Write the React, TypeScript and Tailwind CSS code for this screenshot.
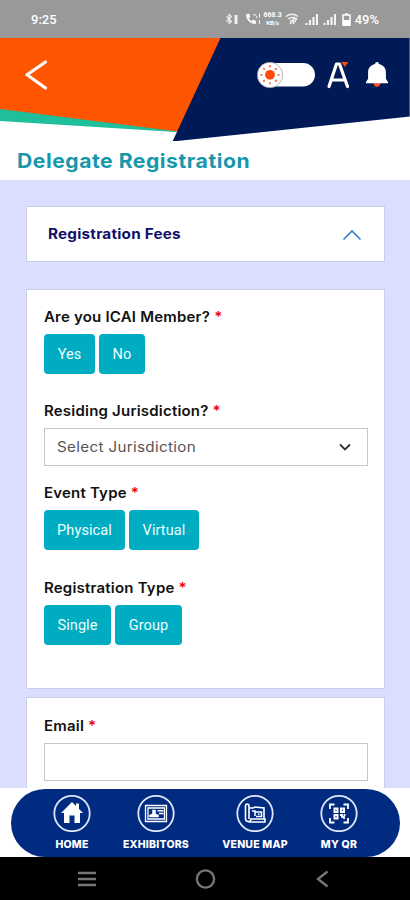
import type { ReactNode } from 'react';

const StatusBar = () => (
  <div className="h-[38px] shrink-0 bg-[#999999] flex items-center justify-between pl-[31px] pr-[31px] text-white font-['Roboto',sans-serif]">
    <span className="text-[13px] font-medium leading-none mt-px">9:25</span>
    <div className="flex items-center">
      <svg className="w-[14px] h-[14px]" viewBox="0 0 14 14" fill="none" stroke="#f0f0f0" strokeWidth="1.1">
        <path d="M1.500 4.500l5 5-2.500 2V2.500l2.500 2-5 5" />
        <path d="M11 3v9" strokeWidth="3" />
      </svg>
      <svg className="w-[16px] h-[14px] ml-[6px]" viewBox="0 0 16 14" fill="none" stroke="#f6f6f6">
        <path d="M1.500 2.500c0 5.500 3.500 9 9 9v-2.500l-2.500-1-1.500 1.500c-1.500-.8-2.500-2-3-3.500l1.500-1.200-1-2.800z" fill="#f6f6f6" />
        <path d="M8 2.500c3 0 4 1.500 4 4M14.500 1.500v4M14.500 8v4" />
      </svg>
      <div className="flex flex-col items-center ml-[2px] w-[20px] text-[7px] leading-[7px] font-bold">
        <span className="h-[7px]">668.3</span>
        <span className="h-[7px] text-[6px]">KB/s</span>
      </div>
      <svg className="w-[14px] h-[12px] ml-[2px]" viewBox="0 0 14 12" fill="none" stroke="#f0f0f0" strokeWidth="1.500">
        <path d="M1 3.500c4-3 8-3 12 0M3 6c3-2 6-2 8 0M5 8.500c1-1 3-1 4 0" />
        <path d="M5 11l5-7M8 11l4-6" />
      </svg>
      <svg className="w-[13px] h-[12px] ml-[6px]" viewBox="0 0 13 12" stroke="#f4f4f4" strokeWidth="2.200">
        <path d="M1.500 12V10M5 12V7M8.500 12V4M12 12V1" />
      </svg>
      <svg className="w-[13px] h-[12px] ml-[5px]" viewBox="0 0 13 12" stroke="#f4f4f4" strokeWidth="2.200">
        <path d="M1.500 12V10M5 12V7M8.500 12V4M12 12V1" />
      </svg>
      <svg className="w-[9px] h-[13px] ml-[6px]" viewBox="0 0 9 13" fill="none" stroke="#fff" strokeWidth="1.500">
        <path d="M1 2h7v10.200H1zM3 1h3" />
        <path d="M1 9.500h7" strokeWidth="5" />
      </svg>
      <span className="ml-[4px] text-[13px] leading-none font-medium">49%</span>
    </div>
  </div>
);

const Header = () => (
  <header className="relative h-[103px] shrink-0">
    <svg className="absolute inset-0 w-full h-full" viewBox="0 0 410 103">
      <path d="M0 68L178 92.500 176 94 0 83z" fill="#1fbf9c" />
      <path d="M0 0H223L178 93.500 0 71z" fill="#ff5500" />
      <path d="M220.500 0H410V78.500L172.500 103.500z" fill="#001a57" />
      <path d="M409.500 0V78" stroke="#4d5f8c" />
    </svg>
    <div className="relative flex items-start">
      <button className="ml-[24px] mt-[21px]" aria-label="Back">
        <svg className="w-[24px] h-[32px]" viewBox="0 0 24 32" fill="none" stroke="#fff" strokeWidth="3.200" strokeLinecap="round" strokeLinejoin="round">
          <path d="M21.500 3L3 15.800 21.500 29" />
        </svg>
      </button>
      <div className="flex-1" />
      <svg className="w-[58px] h-[28px] mt-[23px]" viewBox="0 0 58 28">
        <rect x="1" y="2" width="57" height="23.500" rx="11.750" fill="#fff" />
        <circle cx="13" cy="14" r="12.700" fill="#fff" stroke="#9a9a9a" strokeWidth=".7" />
        <circle cx="13" cy="13.800" r="4.900" fill="#ff4a0c" />
        <g stroke="#ff6a35" strokeWidth="1.800" strokeLinecap="round">
          <path d="M13 5v.6M13 22v.6M4.200 13.800h.6M21.200 13.800h.6M6.800 7.600l.5.500M18.700 19.500l.5.500M6.800 20l.5-.5M18.700 8.100l.5-.5" />
        </g>
      </svg>
      <svg className="w-[24px] h-[44px] ml-[11px] mt-[15px]" viewBox="0 0 24 44" fill="none" stroke="#fff" strokeWidth="3.200" strokeLinecap="round" strokeLinejoin="round">
        <path d="M3 33.500L10.500 11h3L21.500 33.500M6 27h13" />
        <path d="M15 9h7.500l-3.500 5z" fill="#f24a13" stroke="none" />
      </svg>
      <svg className="w-[24px] h-[30px] ml-[15px] mr-[21px] mt-[22px]" viewBox="0 0 24 30">
        <path d="M8.300 22a3.700 5 0 0 0 7.400 0z" fill="#f4511e" />
        <path d="M12 2c1.200 0 1.800.8 1.900 1.900 4.500 1 7 4.100 7 8.300v6.500l2.100 3.200v1.300H1v-1.300l2.100-3.200v-6.500c0-4.200 2.500-7.300 7-8.300C10.200 2.800 10.800 2 12 2z" fill="#fff" />
      </svg>
    </div>
  </header>
);

const Label = ({ children }: { children: ReactNode }) => (
  <p className="w-max h-[22px] mb-[6px] leading-[22px] text-[14px] font-semibold tracking-[0.2px] text-[#111] whitespace-nowrap origin-left scale-x-[1.07]">
    {children} <span className="text-[#f00000]">*</span>
  </p>
);

const Choice = ({ text, className }: { text: string; className: string }) => (
  <button
    className={`h-[40px] rounded bg-[#00acc1] text-[#effdff] text-[14.5px] font-['Roboto',sans-serif] tracking-[0.1px] pt-px ${className}`}>
    {text}
  </button>
);

const TabItem = ({ label, className, children }: { label: string; className: string; children: ReactNode }) => (
  <div className={`flex flex-col items-center shrink-0 ${className}`}>
    <svg className="w-[38px] h-[38px]" viewBox="0 0 38 38" fill="none" stroke="#fff" strokeWidth="1.500">
      <circle cx="19" cy="19.500" r="17.700" stroke="#dfe6fa" strokeWidth="1.800" />
      {children}
    </svg>
    <span className="mt-[6px] text-[10.5px] leading-[13px] font-extrabold tracking-[0.2px] text-white whitespace-nowrap">
      {label}
    </span>
  </div>
);

const BottomNav = () => (
  <nav className="h-[69px] shrink-0 bg-white pl-[11px] pr-[10px] pt-px">
    <div className="h-[68px] rounded-full bg-[#002b80] flex pt-[5px]">
      <TabItem label="HOME" className="ml-[31px] w-[60px]">
        <path d="M19 8L8 19h3v10h5.500v-7.500h5V29H27V19h3l-4-4V9.500h-3V12z" fill="#fff" stroke="none" />
      </TabItem>
      <TabItem label="EXHIBITORS" className="ml-[4px] w-[100px]">
        <path d="M8.500 11.500h21v16h-21zM11 14h16.500v11H11z" strokeWidth="1.300" />
        <path d="M12.500 23v-2l3-1v-4h3v4l3 1v2z" fill="#fff" strokeWidth=".5" />
        <path d="M20.500 16.800h6M22 19.500h4.500" />
      </TabItem>
      <TabItem label="VENUE MAP" className="-ml-px w-[100px]">
        <path d="M13 25V12.500c0-3.300-3.500-3.300-3.500 0v12c0 4 5.500 4 5.500.5h14v3H12.500M13 14h4l2-1 9 1v11" strokeWidth="1.600" />
        <path d="M16 17h3v5M19 18h6.500v4.500H20M22 20.200h1.500" />
      </TabItem>
      <TabItem label="MY QR" className="ml-[4px] w-[60px]">
        <path d="M10 15v-4.500h4.500M23.500 10.500H28V15M10 24v4.500h4.500M23.500 28.500H28V24" strokeWidth="1.800" />
        <path d="M14.500 14.500h3v3.500h-3zM21 14.500h3v3.500h-3zM14.500 21h3v3.500h-3z" strokeWidth="2" />
        <path d="M20 21h2v2h2v2M24.500 20v2" strokeWidth="1.800" />
      </TabItem>
    </div>
  </nav>
);

const SystemNav = () => (
  <div className="h-[43px] shrink-0 bg-black flex items-start justify-between pt-[11px] pl-[77px] pr-[79px]">
    <svg className="w-[20px] h-[22px]" viewBox="0 0 20 22" stroke="#777" strokeWidth="2.500">
      <path d="M1 5h18M1 11h18M1 17h18" />
    </svg>
    <svg className="w-[22px] h-[22px]" viewBox="0 0 22 22" fill="none" stroke="#777" strokeWidth="2.300">
      <circle cx="10.500" cy="11" r="8.600" />
    </svg>
    <svg className="w-[16px] h-[22px]" viewBox="0 0 16 22" fill="none" stroke="#777" strokeWidth="2.300">
      <path d="M12.500 3.500L3 11l9.500 7.500" />
    </svg>
  </div>
);

export default function App() {
  return (
    <div className="w-[410px] h-[900px] bg-white flex flex-col overflow-hidden font-['Inter',sans-serif]">
      <StatusBar />
      <Header />
      <h1 className="w-max h-[39px] shrink-0 ml-[17px] text-[20px] leading-[40px] font-bold tracking-[0.5px] text-[#1697ab] whitespace-nowrap origin-left scale-x-[1.057]">
        Delegate Registration
      </h1>

      <main className="h-[608px] shrink-0 bg-[#dbdeff] px-[26px] pt-[26px] overflow-hidden">
        <section className="w-[359px] h-[56px] bg-white border border-[#cacfe6] flex items-center justify-between pl-[21px] pr-[22px]">
          <h2 className="text-[14px] font-bold tracking-[0.2px] text-[#10106a] -mt-[2px] origin-left scale-x-[1.09]">
            Registration Fees
          </h2>
          <svg className="w-[20px] h-[12px] mt-[2px]" viewBox="0 0 20 12" fill="none" stroke="#347fce" strokeWidth="1.600">
            <path d="M1.500 10.500L10 2l8.500 8.500" />
          </svg>
        </section>

        <section className="mt-[27px] w-[359px] h-[400px] bg-white border border-[#cacfe6] pl-[17px] pt-[16px]">
          <Label>Are you ICAI Member?</Label>
          <div className="flex gap-1">
            <Choice text="Yes" className="w-[51px]" />
            <Choice text="No" className="w-[46px]" />
          </div>
          <div className="mt-[26px]">
            <Label>Residing Jurisdiction?</Label>
            <div className="w-[324px] h-[38px] border border-[#c5c8ca] flex items-center justify-between pl-[12px] pr-[15px]">
              <span className="text-[14px] tracking-[0.3px] text-[#555] -mt-[2px] origin-left scale-x-[1.086]">
                Select Jurisdiction
              </span>
              <svg className="w-[14px] h-[10px]" viewBox="0 0 14 10" fill="none" stroke="#333" strokeWidth="1.800">
                <path d="M2 2.500l5 5 5-5" />
              </svg>
            </div>
          </div>
          <div className="mt-[16px]">
            <Label>Event Type</Label>
            <div className="flex gap-1">
              <Choice text="Physical" className="w-[81px]" />
              <Choice text="Virtual" className="w-[70px]" />
            </div>
          </div>
          <div className="mt-[27px]">
            <Label>Registration Type</Label>
            <div className="flex gap-1">
              <Choice text="Single" className="w-[67px]" />
              <Choice text="Group" className="w-[67px]" />
            </div>
          </div>
        </section>

        <section className="mt-[8px] w-[359px] h-[120px] bg-white border border-[#cacfe6] pl-[17px] pt-[17px]">
          <Label>Email</Label>
          <div className="w-[324px] h-[38px] border border-[#c5c8ca]" />
        </section>
      </main>

      <BottomNav />
      <SystemNav />
    </div>
  );
}
